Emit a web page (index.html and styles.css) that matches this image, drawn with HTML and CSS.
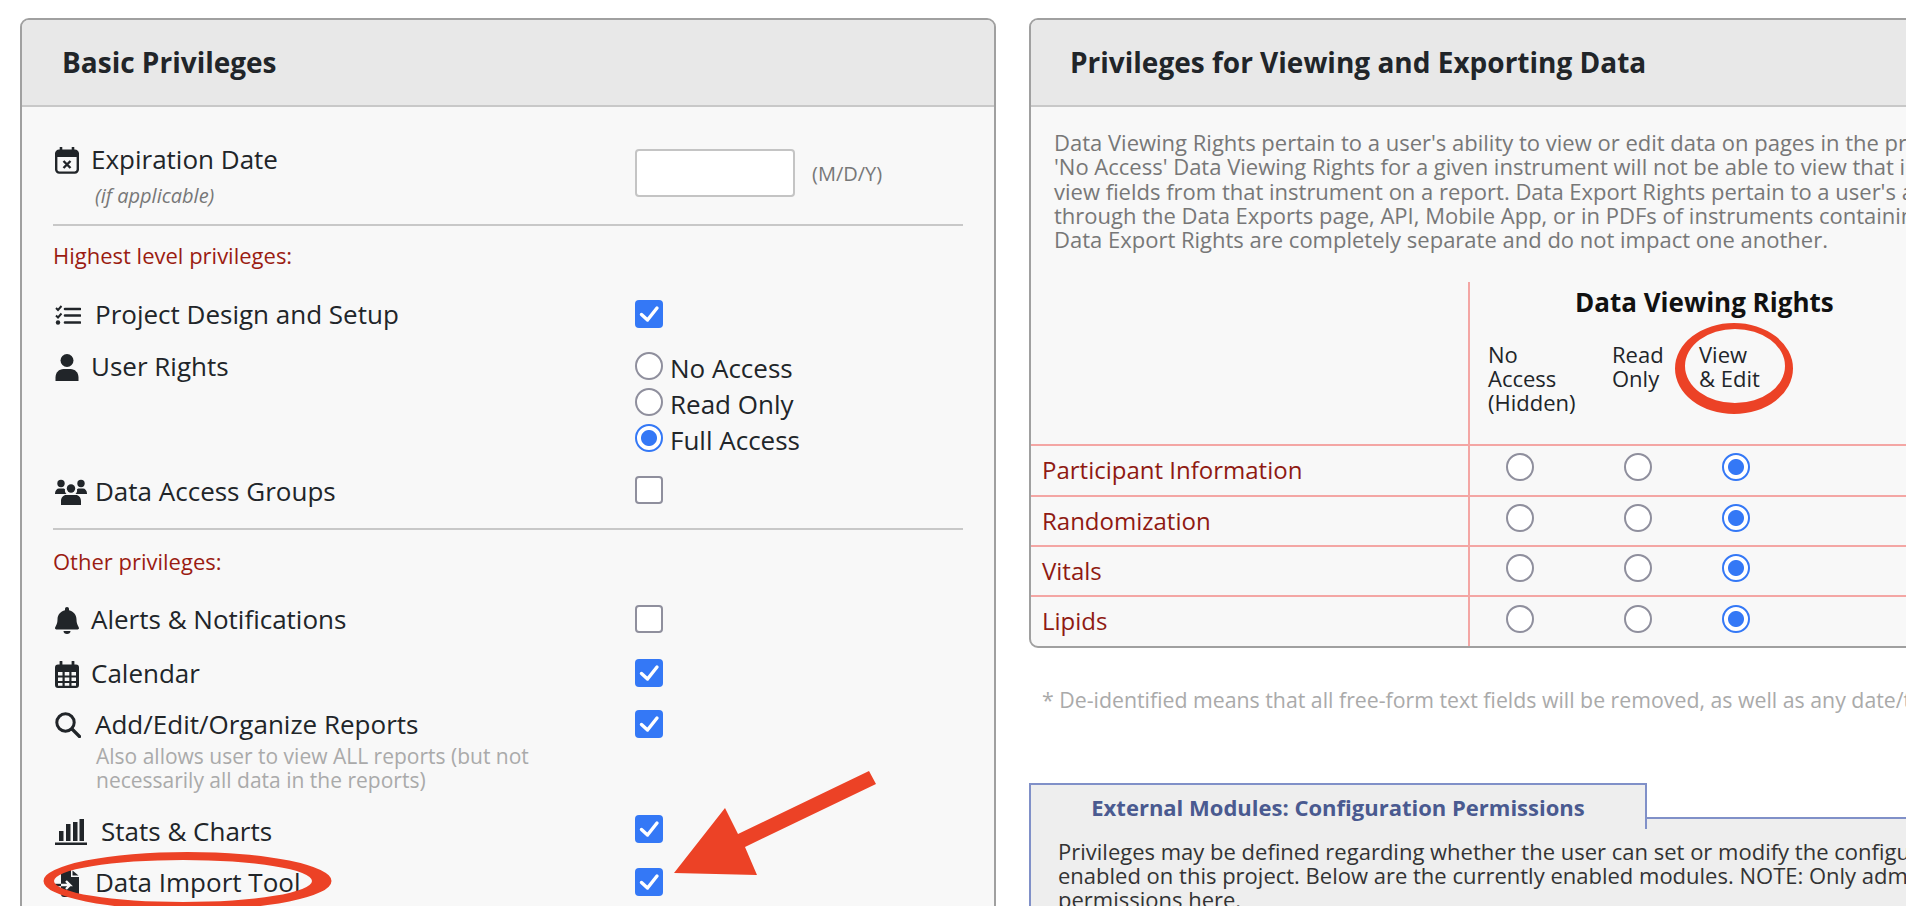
FILE: index.html
```html
<!DOCTYPE html>
<html lang="en">
<head>
<meta charset="utf-8">
<title>User Privileges</title>
<link rel="stylesheet" href="styles.css">
</head>
<body>
<div class="page">
  <section class="panel panel-left">
    <h2 class="panel-head head-left">Basic Privileges</h2>
    <div class="panel-body body-left">
      <div class="row row-exp">
        <div class="label">
          <svg class="ico" viewBox="0 0 24 27"><rect x="1.200" y="3.600" width="21.600" height="22" rx="3" fill="none" stroke="#212529" stroke-width="2.400"/><path d="M1 4h22v6H1z" fill="#212529"/><path d="M6 .5v5M18 .5v5" stroke="#212529" stroke-width="2.600" stroke-linecap="round"/><path d="M8.500 14l7 7M15.500 14l-7 7" stroke="#212529" stroke-width="2.400"/></svg>
          <span class="t">Expiration Date</span>
        </div>
        <div class="sub">(if applicable)</div>
        <div class="date-wrap"><input class="date" type="text" aria-label="Expiration date"><span class="fmt">(M/D/Y)</span></div>
      </div>
      <hr class="rule">
      <div class="group group-high">Highest level privileges:</div>
      <div class="row row-design">
        <div class="label">
          <svg class="ico ico-tasks" viewBox="0 0 26 20"><path d="M1 3l2 2 3.500-4M1 10.500l2 2 3.500-4" fill="none" stroke="#212529" stroke-width="1.900"/><circle cx="3" cy="17.500" r="2.200" fill="#212529"/><path d="M10 4h15M10 10.500h15M10 17.500h15" stroke="#212529" stroke-width="2.600" stroke-linecap="round"/></svg>
          <span class="t">Project Design and Setup</span>
        </div>
        <input class="cb" type="checkbox" checked aria-label="Project Design and Setup">
      </div>
      <div class="row row-user">
        <div class="label">
          <svg class="ico" viewBox="0 0 24 27"><circle cx="12" cy="6.500" r="6.500" fill="#212529"/><path d="M.5 27v-3.500c0-5 3.500-8.500 8-8.500h7c4.500 0 8 3.500 8 8.500V27z" fill="#212529"/></svg>
          <span class="t">User Rights</span>
        </div>
        <div class="radios">
          <label class="opt"><input class="rd" type="radio" name="ur"><span class="opt-text">No Access</span></label>
          <label class="opt"><input class="rd" type="radio" name="ur"><span class="opt-text">Read Only</span></label>
          <label class="opt"><input class="rd" type="radio" name="ur" checked><span class="opt-text">Full Access</span></label>
        </div>
      </div>
      <div class="row row-dag">
        <div class="label">
          <svg class="ico ico-users" viewBox="0 0 32 26"><circle cx="6" cy="4.500" r="3.700" fill="#212529"/><circle cx="26" cy="4.500" r="3.700" fill="#212529"/><circle cx="16" cy="9.500" r="4.200" fill="#212529"/><path d="M0 14.500c0-3 2-5 4-5h4c1 0 1.500.3 2 .8-.3 1.500 0 3.500 1.500 4.700H0zM32 14.500c0-3-2-5-4-5h-4c-1 0-1.500.3-2 .8.3 1.500 0 3.500-1.500 4.700H32zM6 26v-4c0-3.500 2.500-6 5-6h10c2.500 0 5 2.500 5 6v4z" fill="#212529"/></svg>
          <span class="t">Data Access Groups</span>
        </div>
        <input class="cb" type="checkbox" aria-label="Data Access Groups">
      </div>
      <hr class="rule">
      <div class="group group-other">Other privileges:</div>
      <div class="row row-alerts">
        <div class="label">
          <svg class="ico" viewBox="0 0 24 27"><path d="M12 0c1.200 0 2 .9 2 2v1.300c4.500 1 7.500 4.700 7.500 9.200 0 5 2.200 7 2.500 8.500.1.800-.5 1.500-1.300 1.500H1.300C.5 22.500-.1 21.800 0 21c.3-1.500 2.500-3.500 2.500-8.500 0-4.500 3-8.200 7.500-9.200V2c0-1.100.8-2 2-2z" fill="#212529"/><path d="M8.500 24h7c0 1.800-1.500 3-3.500 3s-3.500-1.200-3.500-3z" fill="#212529"/></svg>
          <span class="t">Alerts &amp; Notifications</span>
        </div>
        <input class="cb" type="checkbox" aria-label="Alerts and Notifications">
      </div>
      <div class="row row-cal">
        <div class="label">
          <svg class="ico" viewBox="0 0 24 27"><path d="M3 3.500h18a3 3 0 013 3V24a3 3 0 01-3 3H3a3 3 0 01-3-3V6.500a3 3 0 013-3z" fill="#212529"/><path d="M6 .8v5M18 .8v5" stroke="#212529" stroke-width="2.800" stroke-linecap="round"/><path d="M3 11h4.500v3.500H3zM9.700 11h4.600v3.500H9.700zM16.500 11H21v3.500h-4.500zM3 16.500h4.500V20H3zM9.700 16.500h4.600V20H9.700zM16.500 16.500H21V20h-4.500zM3 22h4.500v2.700H3zM9.700 22h4.600v2.700H9.700zM16.500 22H21v2.700h-4.500z" fill="#f8f8f8"/></svg>
          <span class="t">Calendar</span>
        </div>
        <input class="cb" type="checkbox" checked aria-label="Calendar">
      </div>
      <div class="row row-rep">
        <div class="label">
          <svg class="ico ico-search" viewBox="0 0 26 26"><circle cx="10.500" cy="10.500" r="8.700" fill="none" stroke="#212529" stroke-width="3"/><path d="M17 17l7.500 7.500" stroke="#212529" stroke-width="3.200" stroke-linecap="round"/></svg>
          <span class="t">Add/Edit/Organize Reports</span>
        </div>
        <input class="cb" type="checkbox" checked aria-label="Add, Edit, Organize Reports">
        <div class="note">Also allows user to view ALL reports (but not<br>necessarily all data in the reports)</div>
      </div>
      <div class="row row-stats">
        <div class="label">
          <svg class="ico ico-stats" viewBox="0 0 32 26"><path d="M4 12h4.500v10H4zM11 5h4.500v17H11zM18 3h4.500v19H18zM24.500 0H29v22h-4.500z" fill="#212529"/><path d="M0 23.500h32v2.500H0z" fill="#212529"/></svg>
          <span class="t">Stats &amp; Charts</span>
        </div>
        <input class="cb" type="checkbox" checked aria-label="Stats and Charts">
      </div>
      <div class="row row-import">
        <div class="label">
          <svg class="ico" viewBox="0 0 24 27"><path d="M6 0h10v7h8v17a3 3 0 01-3 3H9a3 3 0 01-3-3z" fill="#212529"/><path d="M17.500 .5l6 5h-6z" fill="#212529"/><path d="M0 15h6" stroke="#212529" stroke-width="2.400"/><path d="M6 15h9l-4-4M15 15l-4 4" fill="none" stroke="#f8f8f8" stroke-width="2.400"/></svg>
          <span class="t">Data Import Tool</span>
        </div>
        <input class="cb" type="checkbox" checked aria-label="Data Import Tool">
      </div>
    </div>
  </section>

  <div class="right-col">
    <section class="panel panel-right">
      <h2 class="panel-head head-right">Privileges for Viewing and Exporting Data</h2>
      <div class="panel-body">
        <p class="intro">Data Viewing Rights pertain to a user's ability to view or edit data on pages in the project, such as data entry forms and reports. A user with<br>'No Access' Data Viewing Rights for a given instrument will not be able to view that instrument in data entry, and they will not be able to<br>view fields from that instrument on a report. Data Export Rights pertain to a user's ability to export data from an instrument, whether it is<br>through the Data Exports page, API, Mobile App, or in PDFs of instruments containing data. Note that Data Viewing Rights and<br>Data Export Rights are completely separate and do not impact one another.</p>
        <table class="rights">
          <colgroup>
            <col class="w-name"><col class="w-a"><col class="w-b"><col class="w-c">
          </colgroup>
          <thead>
            <tr>
              <th class="name-col" rowspan="2"></th>
              <th class="rights-title" colspan="3">Data Viewing Rights</th>
            </tr>
            <tr class="cols">
              <th class="col col-a">No<br>Access<br>(Hidden)</th>
              <th class="col col-b">Read<br>Only</th>
              <th class="col col-c">View<br>&amp; Edit</th>
            </tr>
          </thead>
          <tbody>
            <tr class="r1"><td class="name">Participant Information</td><td class="cell-a"><input class="rd" type="radio" name="r1" aria-label="No Access"></td><td class="cell-b"><input class="rd" type="radio" name="r1" aria-label="Read Only"></td><td class="cell-c"><input class="rd" type="radio" name="r1" checked aria-label="View and Edit"></td></tr>
            <tr class="r2"><td class="name">Randomization</td><td class="cell-a"><input class="rd" type="radio" name="r2" aria-label="No Access"></td><td class="cell-b"><input class="rd" type="radio" name="r2" aria-label="Read Only"></td><td class="cell-c"><input class="rd" type="radio" name="r2" checked aria-label="View and Edit"></td></tr>
            <tr class="r3"><td class="name">Vitals</td><td class="cell-a"><input class="rd" type="radio" name="r3" aria-label="No Access"></td><td class="cell-b"><input class="rd" type="radio" name="r3" aria-label="Read Only"></td><td class="cell-c"><input class="rd" type="radio" name="r3" checked aria-label="View and Edit"></td></tr>
            <tr class="r4"><td class="name">Lipids</td><td class="cell-a"><input class="rd" type="radio" name="r4" aria-label="No Access"></td><td class="cell-b"><input class="rd" type="radio" name="r4" aria-label="Read Only"></td><td class="cell-c"><input class="rd" type="radio" name="r4" checked aria-label="View and Edit"></td></tr>
          </tbody>
        </table>
      </div>
    </section>
    <p class="footnote">* De-identified means that all free-form text fields will be removed, as well as any date/time fields and Identifier fields.</p>
    <section class="modules">
      <div class="tab-line">
        <h3 class="tab">External Modules: Configuration Permissions</h3>
      </div>
      <p class="modules-text">Privileges may be defined regarding whether the user can set or modify the configuration of each External Module<br>enabled on this project. Below are the currently enabled modules. NOTE: Only administrators can modify the<br>permissions here.</p>
    </section>
  </div>
</div>

<svg class="marks" viewBox="0 0 1906 906" aria-hidden="true">
  <path fill-rule="evenodd" fill="#ec4226" d="M43.500 881a144 29 0 1 0 288 0a144 29 0 1 0-288 0ZM54 881a129 21 0 1 0 258 0a129 21 0 1 0-258 0Z"/>
  <path fill-rule="evenodd" fill="#ec4226" d="M1675 368.500a59 45.500 0 1 0 118 0a59 45.500 0 1 0-118 0ZM1685 366a50 37 0 1 0 100 0a50 37 0 1 0-100 0Z"/>
  <path d="M869 771L876 784L745 847L757 875L674 873L725 808L738 834Z" fill="#ec4226"/>
</svg>
</body>
</html>
```
FILE: styles.css
```css
* { box-sizing: border-box; }
html, body { margin: 0; height: 906px; overflow: hidden; background: #fff; }
body { font-family: "Open Sans", "Noto Sans", sans-serif; color: #212529; position: relative; }
.page { display: flex; align-items: flex-start; gap: 33px; padding: 18px 0 0 20px; width: 2400px; }
.panel { border: 2px solid #a0a0a0; border-radius: 9px; background: #f8f8f8; overflow: hidden; }
.panel-left { width: 976px; height: 1100px; flex: none; }
.right-col { width: 1300px; flex: none; }
.panel-head { margin: 0; height: 87px; background: #e8e8e8; border-bottom: 2px solid #c8c8c8; font-size: 28px; font-weight: 700; line-height: 84px; color: #212529; padding-left: 40px; }
.head-right { padding-left: 39px; }
.body-left { padding: 0 31px; }
.row { display: grid; grid-template-columns: 582px 1fr; align-items: start; align-content: start; }
.label { display: flex; align-items: center; height: 30px; }
.ico { width: 24px; height: 27px; flex: none; margin-left: 2px; margin-right: 12px; }
.ico-tasks { width: 26px; height: 20px; margin-right: 14px; }
.ico-users { width: 32px; height: 26px; margin-right: 8px; }
.ico-search { width: 26px; height: 26px; margin-right: 14px; }
.ico-stats { width: 32px; height: 26px; margin-right: 14px; }
.row-import .ico { margin-right: 16px; }
.t { font-size: 26px; line-height: 30px; margin-top: -2px; white-space: nowrap; }
.row-exp { padding-top: 38px; height: 117px; grid-template-rows: 30px auto; }
.sub { grid-column: 1; grid-row: 2; padding: 9px 0 0 42px; font-size: 20px; line-height: 24px; font-style: italic; color: #777; }
.date-wrap { grid-column: 2; grid-row: 1 / span 2; display: flex; align-items: center; margin-top: 4px; }
.date { width: 160px; height: 48px; background: #fff; border: 2px solid #c4c4c4; border-radius: 4px; flex: none; }
.fmt { margin-left: 17px; font-size: 20px; color: #777; }
.rule { margin: 0; border: 0; height: 2px; background: #c8c8c8; }
.group { font-size: 22px; line-height: 28px; color: #9b1c12; }
.group-high { margin-top: 15px; }
.group-other { margin-top: 17px; }
.cb { appearance: none; margin: 0; width: 28px; height: 28px; display: block; background: #fff; border: 2px solid #8f8f9d; border-radius: 4px; }
.cb:checked { border: 0; background-color: #3478f6; background-repeat: no-repeat; background-position: center; background-size: 28px 28px; background-image: url("data:image/svg+xml,%3Csvg xmlns='http://www.w3.org/2000/svg' viewBox='0 0 28 28'%3E%3Cpath d='M6.500 14.500l6 5.500 9.500-12' fill='none' stroke='%23fff' stroke-width='3.400' stroke-linecap='round' stroke-linejoin='round'/%3E%3C/svg%3E"); }
.rd { appearance: none; margin: 0; width: 28px; height: 28px; display: block; flex: none; background: #fff; border: 2px solid #8f8f9d; border-radius: 50%; }
.rd:checked { border-color: #3478f6; background: radial-gradient(circle, #3478f6 0 7.500px, #fff 8.500px); }
.row-design { margin-top: 31px; height: 52px; }
.radios { display: flex; flex-direction: column; gap: 8px; }
.opt { display: flex; align-items: center; font-size: 26px; line-height: 28px; height: 28px; gap: 7px; }
.opt-text { margin-top: 4px; }
.row-dag { margin-top: 24px; height: 52px; }
.row-dag .label { margin-top: 1px; }
.row-alerts { margin-top: 30px; height: 54px; }
.row-cal { height: 51px; }
.row-rep { height: 105px; }
.note { grid-column: 1; padding-left: 43px; margin-top: 5px; font-size: 21px; line-height: 23.500px; color: #aaa; }
.row-stats { height: 53px; }
.row-stats .label { margin-top: 2px; }
.row-import { height: 40px; }
.intro { margin: 23px 0 0 23px; height: 124px; font-size: 22px; line-height: 24.250px; color: #777; white-space: nowrap; }
.rights { margin-top: 28px; border-collapse: separate; border-spacing: 0; table-layout: fixed; width: 957px; }
.w-name { width: 439px; }
.w-a { width: 136px; }
.w-b { width: 82px; }
.w-c { width: 300px; }
.rights th, .rights td { padding: 0; }
.rights thead .name-col, .rights td.name { border-right: 2px solid #f4a6a4; }
.rights th.rights-title { height: 42px; padding-left: 105px; padding-bottom: 2px; text-align: left; font-size: 26px; font-weight: 700; color: #111; vertical-align: middle; white-space: nowrap; }
.cols { height: 120px; }
.rights .cols th { padding-top: 18px; vertical-align: top; font-size: 22px; font-weight: 400; line-height: 24.200px; text-align: left; color: #212529; white-space: nowrap; }
.rights .cols .col-a { padding-left: 18px; }
.rights .cols .col-b { padding-left: 6px; }
.rights .cols .col-c { padding-left: 11px; }
.rights tbody td { height: 50px; vertical-align: top; padding-top: 7px; border-top: 2px solid #f4a6a4; }
.rights .r1 td, .rights .r4 td { height: 51px; }
.rights .r4 td { padding-top: 8px; }
.rights td.name { padding-left: 11px; padding-top: 9px; font-size: 24px; line-height: 30px; color: #8f1a12; white-space: nowrap; }
.rights td.cell-a { padding-left: 36px; }
.rights td.cell-b { padding-left: 18px; }
.rights td.cell-c { padding-left: 34px; }
.footnote { margin: 38px 0 0 13px; font-size: 21.300px; line-height: 27px; color: #aaa; white-space: nowrap; }
.modules { margin-top: 70px; background: #eee; border-left: 2px solid #8090c8; height: 300px; }
.tab-line { height: 46px; background: #fff; position: relative; }
.tab { margin: 0; width: 616px; height: 46px; background: #eee; border-top: 2px solid #8090c8; border-right: 2px solid #8090c8; font-size: 22px; font-weight: 700; line-height: 44px; text-align: center; color: #4a5a90; white-space: nowrap; }
.tab-line::after { content: ""; position: absolute; left: 616px; right: 0; top: 34px; bottom: 0; background: #eee; border-top: 2px solid #8090c8; }
.modules-text { margin: 10px 0 0 27px; font-size: 22px; line-height: 24px; color: #333; white-space: nowrap; }
.marks { position: absolute; left: 0; top: 0; width: 1906px; height: 906px; pointer-events: none; }
```
